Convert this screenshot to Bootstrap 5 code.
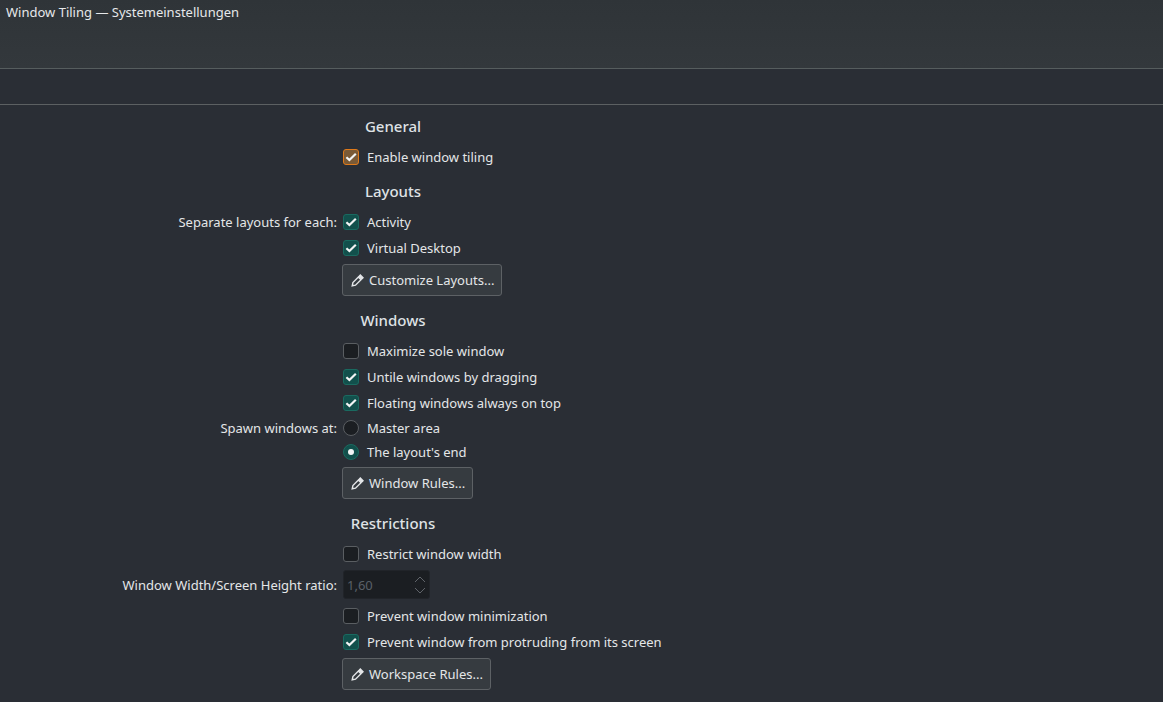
<!DOCTYPE html>
<html lang="de">

<head>
    <meta charset="UTF-8">
    <meta name="viewport" content="width=device-width, initial-scale=1.0">
    <title>Window Tiling — Systemeinstellungen</title>
    <link href="https://cdn.jsdelivr.net/npm/bootstrap@5.3.0/dist/css/bootstrap.min.css" rel="stylesheet">
    <style>
        html, body {
            height: 100%;
        }

        body {
            background-color: #2a2e35;
            color: #e4e6e8;
            font-family: "Noto Sans", sans-serif;
            font-size: 13px;
            line-height: 18px;
            overflow: hidden;
        }

        .title-area {
            height: 69px;
            padding: 3px 6px;
            background: linear-gradient(#2f3438, #33383c);
            border-bottom: 1px solid #565d5e;
            color: #e6e8ea;
        }

        .tool-area {
            height: 36px;
            border-bottom: 1px solid #5c6062;
        }

        .settings-form {
            padding-top: 12px;
        }

        .group-title {
            width: 786px;
            height: 20px;
            margin: 0 0 7px;
            font-size: 15px;
            font-weight: 500;
            line-height: 18px;
            text-align: center;
            color: #dfe2e5;
        }

        .group-title.after-check {
            margin-top: 12px;
        }

        .group-title.after-button {
            margin-top: 15px;
        }

        .form-line {
            height: 26px;
        }

        .form-line.radio-line {
            height: 24px;
        }

        .form-line.button-line {
            height: 32px;
            margin-top: 3px;
        }

        .form-line.spin-line {
            height: 29px;
            margin: 3px 0 4px;
        }

        .line-label {
            width: 337px;
            flex: none;
            text-align: right;
        }

        .line-field {
            margin-left: 6px;
            gap: 8px;
        }

        .form-line .form-check-input {
            width: 16px;
            height: 16px;
            margin: 0;
            flex: none;
            background-color: #1b1e22;
            border: 1px solid #5a5e62;
        }

        .form-line .form-check-input[type=checkbox] {
            border-radius: 3px;
        }

        .form-line .form-check-input:checked {
            background-color: #12504c;
            border-color: #1a6a60;
            background-size: 14px 14px;
            background-position: 0 0;
            background-image: url("data:image/svg+xml,%3csvg xmlns='http://www.w3.org/2000/svg' viewBox='0 0 14 14'%3e%3cpath fill='none' stroke='%23f2f4f4' stroke-width='2.2' d='M2.4 7.2 5.4 10 11.8 3.8'/%3e%3c/svg%3e");
        }

        .form-line .form-check-input.has-focus:checked {
            background-color: #7a5a36;
            border-color: #e07a1a;
        }

        .form-line .form-check-input[type=radio]:checked {
            background-size: 16px 16px;
            background-image: url("data:image/svg+xml,%3csvg xmlns='http://www.w3.org/2000/svg' viewBox='0 0 16 16'%3e%3ccircle cx='7' cy='7' r='3' fill='%23f2f4f4'/%3e%3c/svg%3e");
            background-position: 0 0;
        }

        .line-text {
            color: #e4e6e8;
            white-space: nowrap;
        }

        .rule-btn {
            height: 32px;
            margin-left: -1px;
            padding: 0 7px 0 8px;
            display: inline-flex;
            align-items: center;
            gap: 5px;
            background-color: #363b40;
            border: 1px solid #5d6165;
            border-radius: 3px;
            color: #e4e6e8;
            font-size: 13px;
            line-height: 18px;
            white-space: nowrap;
        }

        .spin-box {
            width: 87px;
            height: 29px;
            background-color: #1b1e22;
            border: 1px solid #212429;
            border-radius: 3px;
            padding: 0 3px 0 3px;
            color: #596068;
        }

        .spin-arrows {
            gap: 4px;
        }
    </style>
</head>

<body>
    <div class="title-area">Window Tiling — Systemeinstellungen</div>
    <div class="tool-area"></div>

    <div class="settings-form">
        <h2 class="group-title">General</h2>
        <div class="form-line d-flex align-items-center">
            <div class="line-label"></div>
            <div class="line-field d-flex align-items-center">
                <input class="form-check-input has-focus" type="checkbox" checked>
                <span class="line-text">Enable window tiling</span>
            </div>
        </div>

        <h2 class="group-title after-check">Layouts</h2>
        <div class="form-line d-flex align-items-center">
            <div class="line-label">Separate layouts for each:</div>
            <div class="line-field d-flex align-items-center">
                <input class="form-check-input" type="checkbox" checked>
                <span class="line-text">Activity</span>
            </div>
        </div>
        <div class="form-line d-flex align-items-center">
            <div class="line-label"></div>
            <div class="line-field d-flex align-items-center">
                <input class="form-check-input" type="checkbox" checked>
                <span class="line-text">Virtual Desktop</span>
            </div>
        </div>
        <div class="form-line button-line d-flex align-items-center">
            <div class="line-label"></div>
            <div class="line-field d-flex align-items-center">
                <button class="rule-btn" type="button">
                    <svg width="13" height="13" viewBox="0 0 13 13" fill="none" stroke="#e4e6e8" stroke-width="1.4"><path d="M1.2 11.8 1.9 8.6 7.4 3.1 10 5.7 4.5 11.2Z"/><path d="M8 2.4 9.3 1.1 12 3.8 10.7 5.1Z" fill="#e4e6e8"/></svg>
                    Customize Layouts...
                </button>
            </div>
        </div>

        <h2 class="group-title after-button">Windows</h2>
        <div class="form-line d-flex align-items-center">
            <div class="line-label"></div>
            <div class="line-field d-flex align-items-center">
                <input class="form-check-input" type="checkbox">
                <span class="line-text">Maximize sole window</span>
            </div>
        </div>
        <div class="form-line d-flex align-items-center">
            <div class="line-label"></div>
            <div class="line-field d-flex align-items-center">
                <input class="form-check-input" type="checkbox" checked>
                <span class="line-text">Untile windows by dragging</span>
            </div>
        </div>
        <div class="form-line d-flex align-items-center">
            <div class="line-label"></div>
            <div class="line-field d-flex align-items-center">
                <input class="form-check-input" type="checkbox" checked>
                <span class="line-text">Floating windows always on top</span>
            </div>
        </div>
        <div class="form-line radio-line d-flex align-items-center">
            <div class="line-label">Spawn windows at:</div>
            <div class="line-field d-flex align-items-center">
                <input class="form-check-input" type="radio" name="spawn">
                <span class="line-text">Master area</span>
            </div>
        </div>
        <div class="form-line radio-line d-flex align-items-center">
            <div class="line-label"></div>
            <div class="line-field d-flex align-items-center">
                <input class="form-check-input" type="radio" name="spawn" checked>
                <span class="line-text">The layout's end</span>
            </div>
        </div>
        <div class="form-line button-line d-flex align-items-center">
            <div class="line-label"></div>
            <div class="line-field d-flex align-items-center">
                <button class="rule-btn" type="button">
                    <svg width="13" height="13" viewBox="0 0 13 13" fill="none" stroke="#e4e6e8" stroke-width="1.4"><path d="M1.2 11.8 1.9 8.6 7.4 3.1 10 5.7 4.5 11.2Z"/><path d="M8 2.4 9.3 1.1 12 3.8 10.7 5.1Z" fill="#e4e6e8"/></svg>
                    Window Rules...
                </button>
            </div>
        </div>

        <h2 class="group-title after-button">Restrictions</h2>
        <div class="form-line d-flex align-items-center">
            <div class="line-label"></div>
            <div class="line-field d-flex align-items-center">
                <input class="form-check-input" type="checkbox">
                <span class="line-text">Restrict window width</span>
            </div>
        </div>
        <div class="form-line spin-line d-flex align-items-center">
            <div class="line-label">Window Width/Screen Height ratio:</div>
            <div class="line-field d-flex align-items-center">
                <div class="spin-box d-flex align-items-center justify-content-between">
                    <span>1,60</span>
                    <span class="spin-arrows d-flex flex-column">
                        <svg class="d-block" width="12" height="7" viewBox="0 0 12 7" fill="none" stroke="#60646a"><path d="M1 6 6 1 11 6"/></svg>
                        <svg class="d-block" width="12" height="7" viewBox="0 0 12 7" fill="none" stroke="#60646a"><path d="M1 1 6 6 11 1"/></svg>
                    </span>
                </div>
            </div>
        </div>
        <div class="form-line d-flex align-items-center">
            <div class="line-label"></div>
            <div class="line-field d-flex align-items-center">
                <input class="form-check-input" type="checkbox">
                <span class="line-text">Prevent window minimization</span>
            </div>
        </div>
        <div class="form-line d-flex align-items-center">
            <div class="line-label"></div>
            <div class="line-field d-flex align-items-center">
                <input class="form-check-input" type="checkbox" checked>
                <span class="line-text">Prevent window from protruding from its screen</span>
            </div>
        </div>
        <div class="form-line button-line d-flex align-items-center">
            <div class="line-label"></div>
            <div class="line-field d-flex align-items-center">
                <button class="rule-btn" type="button">
                    <svg width="13" height="13" viewBox="0 0 13 13" fill="none" stroke="#e4e6e8" stroke-width="1.4"><path d="M1.2 11.8 1.9 8.6 7.4 3.1 10 5.7 4.5 11.2Z"/><path d="M8 2.4 9.3 1.1 12 3.8 10.7 5.1Z" fill="#e4e6e8"/></svg>
                    Workspace Rules...
                </button>
            </div>
        </div>
    </div>

    <script src="https://cdn.jsdelivr.net/npm/bootstrap@5.3.0/dist/js/bootstrap.bundle.min.js"></script>
</body>

</html>
